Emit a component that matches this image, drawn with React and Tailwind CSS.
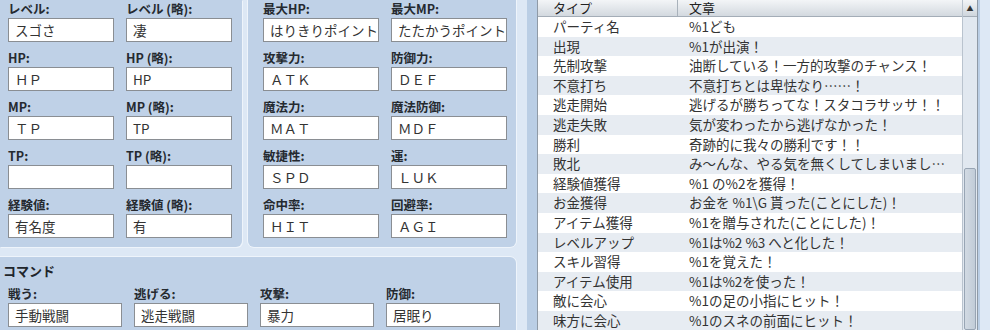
import React from 'react';

const basic = [
    ['レベル:', 'スゴさ', 'レベル (略):', '凄'],
    ['HP:', 'ＨＰ', 'HP (略):', 'HP'],
    ['MP:', 'ＴＰ', 'MP (略):', 'TP'],
    ['TP:', '', 'TP (略):', ''],
    ['経験値:', '有名度', '経験値 (略):', '有'],
];

const params = [
    ['最大HP:', 'はりきりポイント', '最大MP:', 'たたかうポイント'],
    ['攻撃力:', 'ＡＴＫ', '防御力:', 'ＤＥＦ'],
    ['魔法力:', 'ＭＡＴ', '魔法防御:', 'ＭＤＦ'],
    ['敏捷性:', 'ＳＰＤ', '運:', 'ＬＵＫ'],
    ['命中率:', 'ＨＩＴ', '回避率:', 'ＡＧＩ'],
];

const commands = [
    ['戦う:', '手動戦闘'],
    ['逃げる:', '逃走戦闘'],
    ['攻撃:', '暴力'],
    ['防御:', '居眠り'],
];

const messages = [
    ['パーティ名', '%1ども'],
    ['出現', '%1が出演！'],
    ['先制攻撃', '油断している！一方的攻撃のチャンス！'],
    ['不意打ち', '不意打ちとは卑怯なり……！'],
    ['逃走開始', '逃げるが勝ちってな！スタコラサッサ！！'],
    ['逃走失敗', '気が変わったから逃げなかった！'],
    ['勝利', '奇跡的に我々の勝利です！！'],
    ['敗北', 'み〜んな、やる気を無くしてしまいまし…'],
    ['経験値獲得', '%1 の%2を獲得！'],
    ['お金獲得', 'お金を %1\\G 貰った(ことにした)！'],
    ['アイテム獲得', '%1を贈与された(ことにした)！'],
    ['レベルアップ', '%1は%2 %3 へと化した！'],
    ['スキル習得', '%1を覚えた！'],
    ['アイテム使用', '%1は%2を使った！'],
    ['敵に会心', '%1の足の小指にヒット！'],
    ['味方に会心', '%1のスネの前面にヒット！'],
];

const Field = ({ label, value }) => (
    <div className="flex flex-col">
        <div className="h-[18px] leading-[18px] text-[12.5px] font-bold text-[#252a30] whitespace-nowrap">{label}</div>
        <div className="h-[24px] bg-white border border-[#8a8e93] pl-[6px] leading-[22px] text-[13.5px] text-[#333] whitespace-nowrap overflow-hidden">
            {value}
        </div>
    </div>
);

const App = () => {
    return (
        <div className="w-[990px] h-[330px] overflow-hidden bg-[#dde8f5] flex font-['Noto_Sans_CJK_JP','DejaVu_Sans',sans-serif]">
            <div className="w-[516px] flex flex-col shrink-0">
                <div className="flex gap-[6px]">
                    {/* basic status */}
                    <div className="w-[242px] bg-[#bfd1e7] rounded-br-[6px] pl-[8px] pr-[10px] pb-[9px] shadow-[1px_1px_0_#eef4fb]">
                        <div className="grid grid-cols-[106px_106px] gap-x-[12px] gap-y-[7px]">
                            {basic.map(r => (
                                <React.Fragment key={r[0]}>
                                    <Field label={r[0]} value={r[1]} />
                                    <Field label={r[2]} value={r[3]} />
                                </React.Fragment>
                            ))}
                        </div>
                    </div>
                    {/* parameters */}
                    <div className="w-[268px] bg-[#bfd1e7] rounded-b-[6px] pl-[15px] pr-[9px] pb-[9px] shadow-[0_1px_0_#eef4fb,1px_0_0_#eef4fb,-1px_0_0_#eef4fb]">
                        <div className="grid grid-cols-[116px_116px] gap-x-[12px] gap-y-[7px]">
                            {params.map(r => (
                                <React.Fragment key={r[0]}>
                                    <Field label={r[0]} value={r[1]} />
                                    <Field label={r[2]} value={r[3]} />
                                </React.Fragment>
                            ))}
                        </div>
                    </div>
                </div>

                {/* commands */}
                <div className="mt-[10px] flex-1 bg-[#bfd1e7] rounded-tr-[6px] pl-[8px] pt-[5px] shadow-[0_-1px_0_#eef4fb,1px_0_0_#eef4fb]">
                    <div className="-ml-[5px] h-[18px] leading-[18px] text-[13px] font-bold text-[#20252b]">コマンド</div>
                    <div className="mt-[5px] grid grid-cols-[114px_114px_114px_114px] gap-x-[12px]">
                        {commands.map(c => (
                            <Field key={c[0]} label={c[0]} value={c[1]} />
                        ))}
                    </div>
                </div>
            </div>

            {/* message list */}
            <div className="ml-[11px] w-[453px] bg-[#bacee5] pl-[10px] pr-[2px]">
                <div className="w-[441px] h-full flex bg-white border-l border-r border-[#8f9aa6]">
                    <div className="flex-1 flex flex-col overflow-hidden">
                        <div className="h-[17px] shrink-0 flex bg-gradient-to-b from-[#f3f5f7] to-[#d3d9df] border-b border-[#a4adb7] text-[13px] leading-[16px] text-[#222]">
                            <div className="w-[140px] pl-[15px] border-r border-[#a9b2bb]">タイプ</div>
                            <div className="pl-[11px]">文章</div>
                        </div>
                        {messages.map((m, i) => (
                            <div
                                key={m[0]}
                                className={`h-[19.6px] shrink-0 flex leading-[19.6px] text-[13.5px] text-[#333] whitespace-nowrap ${i % 2 ? 'bg-[#e7ecf2]' : 'bg-white'}`}
                            >
                                <div className="w-[140px] pl-[15px]">{m[0]}</div>
                                <div className="flex-1 pl-[11px] overflow-hidden">{m[1]}</div>
                            </div>
                        ))}
                    </div>
                    {/* scrollbar */}
                    <div className="w-[15px] flex flex-col bg-[#e1e8f0] border-l border-[#b9c3ce]">
                        <div className="h-[17px] flex items-center justify-center bg-gradient-to-b from-[#f2f4f6] to-[#cfd6dd] border-b border-[#a4adb7] text-[7px] text-[#333]">
                            ▲
                        </div>
                        <div className="mt-[151px] mx-[1px] flex-1 rounded-[2px] bg-gradient-to-r from-[#d2dae3] to-[#c1ccd8] border border-[#98a5b4]" />
                    </div>
                </div>
            </div>
        </div>
    );
};

export default App;
